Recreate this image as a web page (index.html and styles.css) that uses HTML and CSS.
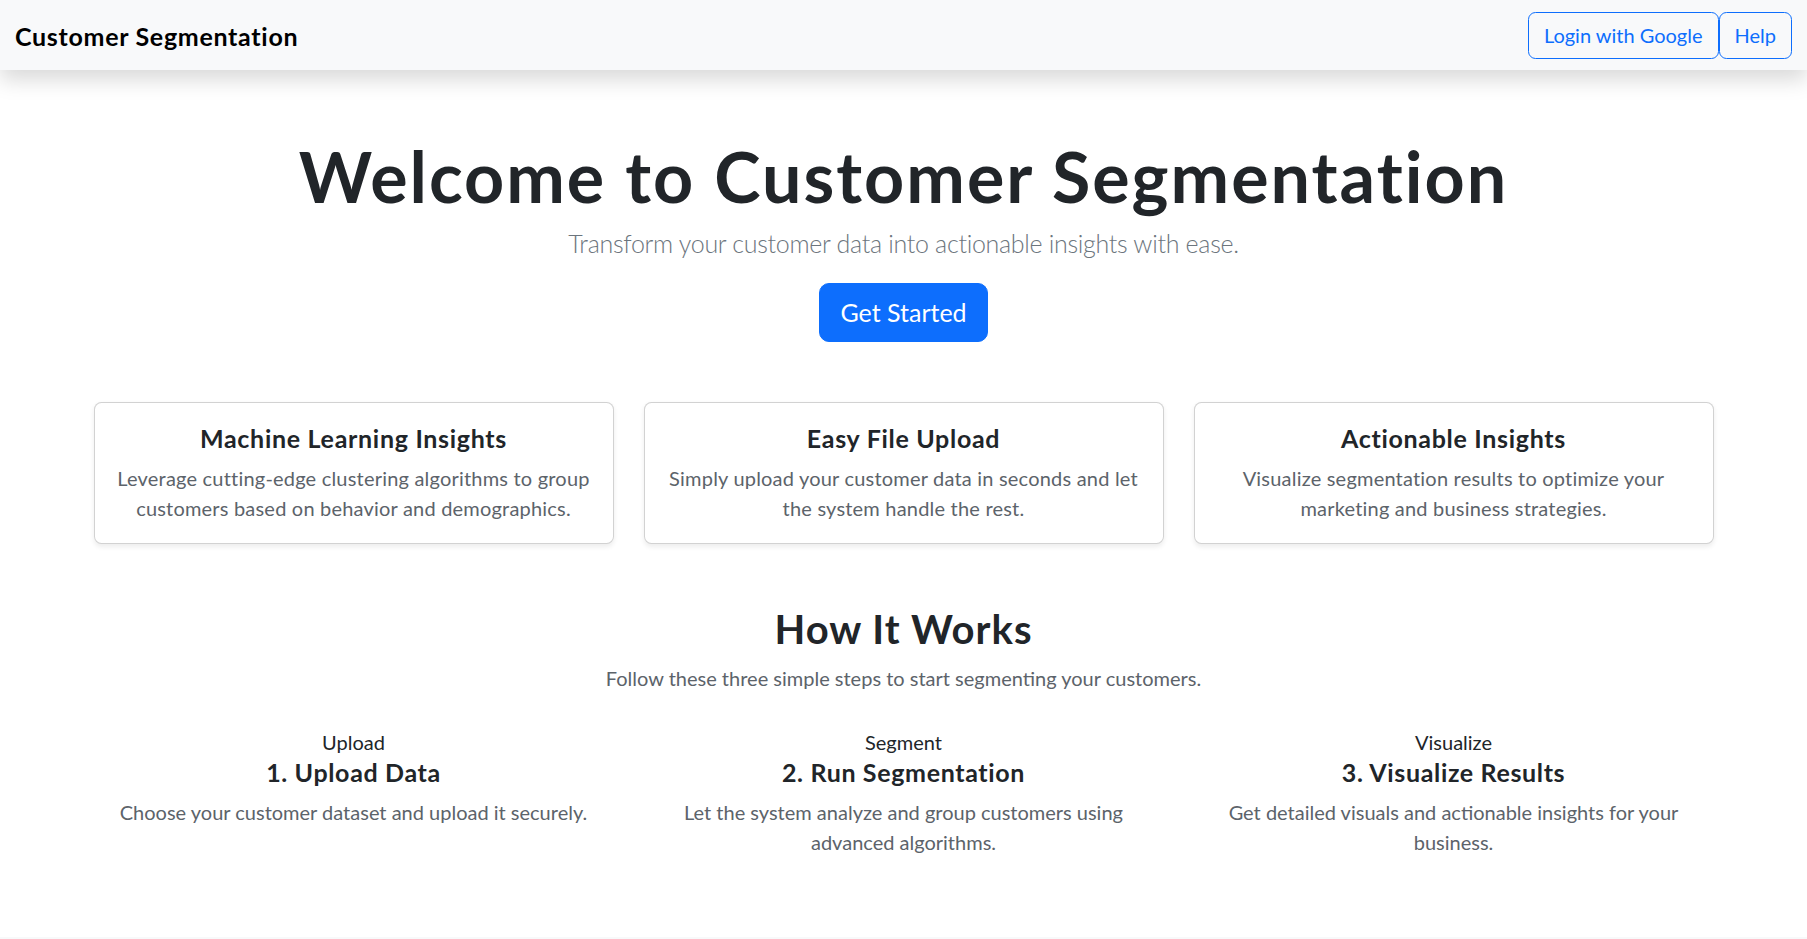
FILE: index.html
```html
<!DOCTYPE html>
<html lang="en">
<head>
<meta charset="utf-8">
<title>Customer Segmentation</title>
<link rel="stylesheet" href="styles.css">
</head>
<body>
<nav class="navbar">
  <a class="brand" href="#">Customer Segmentation</a>
  <div class="nav-actions">
    <a class="btn-outline" href="#">Login with Google</a>
    <a class="btn-outline" href="#">Help</a>
  </div>
</nav>

<main class="container">
  <section class="hero">
    <h1 class="hero-title">Welcome to Customer Segmentation</h1>
    <p class="lead">Transform your customer data into actionable insights with ease.</p>
    <a class="btn-primary" href="#">Get Started</a>
  </section>

  <section class="features">
    <div class="card">
      <h5 class="card-title">Machine Learning Insights</h5>
      <p class="card-text">Leverage cutting-edge clustering algorithms to group customers based on behavior and demographics.</p>
    </div>
    <div class="card">
      <h5 class="card-title">Easy File Upload</h5>
      <p class="card-text">Simply upload your customer data in seconds and let the system handle the rest.</p>
    </div>
    <div class="card">
      <h5 class="card-title">Actionable Insights</h5>
      <p class="card-text">Visualize segmentation results to optimize your marketing and business strategies.</p>
    </div>
  </section>

  <section class="how">
    <h2 class="how-title">How It Works</h2>
    <p class="how-sub">Follow these three simple steps to start segmenting your customers.</p>
    <div class="steps">
      <div class="step">
        <span class="step-img">Upload</span>
        <h5 class="step-title">1. Upload Data</h5>
        <p class="step-text">Choose your customer dataset and upload it securely.</p>
      </div>
      <div class="step">
        <span class="step-img">Segment</span>
        <h5 class="step-title">2. Run Segmentation</h5>
        <p class="step-text">Let the system analyze and group customers using advanced algorithms.</p>
      </div>
      <div class="step">
        <span class="step-img">Visualize</span>
        <h5 class="step-title">3. Visualize Results</h5>
        <p class="step-text">Get detailed visuals and actionable insights for your business.</p>
      </div>
    </div>
  </section>
</main>

<footer class="footer"></footer>
</body>
</html>
```

FILE: styles.css
```css
* { box-sizing: border-box; }

html, body {
  margin: 0;
  padding: 0;
}

body {
  font-family: "Lato", "Noto Sans", sans-serif;
  font-size: 20px;
  line-height: 1.5;
  color: #212529;
  background: #ffffff;
}

a { text-decoration: none; }

.navbar {
  height: 70px;
  padding: 0 15px;
  background: #f8f9fa;
  box-shadow: 0 10px 20px rgba(0, 0, 0, 0.15);
  display: flex;
  align-items: center;
  justify-content: space-between;
  position: relative;
  z-index: 2;
}

.brand {
  font-size: 25px;
  font-weight: 700;
  color: #000;
  line-height: 37.5px;
  padding-top: 4px;
  letter-spacing: 0.7px;
}

.nav-actions {
  display: flex;
}

.btn-outline {
  display: inline-block;
  font-size: 20px;
  line-height: 30px;
  padding: 7.5px 15px;
  color: #0d6efd;
  border: 1px solid #0d6efd;
  border-radius: 7.5px;
}

.container {
  max-width: 1650px;
  margin: 0 auto;
  padding: 0 15px;
}

.hero {
  text-align: center;
  padding-top: 61px;
}

.hero-title {
  font-size: 70px;
  font-weight: 700;
  line-height: 84px;
  letter-spacing: 2px;
  padding-top: 3px;
  margin: 0 0 7px;
}

.lead {
  font-size: 25px;
  font-weight: 300;
  line-height: 37.5px;
  letter-spacing: -0.3px;
  color: #6c757d;
  margin: 0 0 20px;
}

.btn-primary {
  display: inline-block;
  font-size: 25px;
  line-height: 37.5px;
  padding: 10px 20px;
  color: #fff;
  background: #0d6efd;
  border: 1px solid #0d6efd;
  border-radius: 10px;
}

.features {
  margin-top: 60px;
  display: grid;
  grid-template-columns: repeat(3, 1fr);
  gap: 30px;
}

.card {
  border: 1px solid rgba(0, 0, 0, 0.175);
  border-radius: 7.5px;
  box-shadow: 0 2.5px 5px rgba(0, 0, 0, 0.075);
  padding: 20px;
  text-align: center;
  background: #fff;
}

.card-title {
  font-size: 25px;
  font-weight: 700;
  line-height: 30px;
  letter-spacing: 0.7px;
  margin: 0 0 10px;
}

.card-text {
  margin: 0;
  color: #5c636a;
  letter-spacing: 0.2px;
}

.how {
  text-align: center;
  margin-top: 61px;
}

.how-title {
  font-size: 40px;
  font-weight: 700;
  line-height: 48px;
  letter-spacing: 1px;
  margin: 0 0 10px;
}

.how-sub {
  margin: 0 0 34px;
  color: #5c636a;
}

.steps {
  display: grid;
  grid-template-columns: repeat(3, 1fr);
  gap: 30px;
}

.step-img {
  display: block;
  line-height: 30px;
  color: #212529;
}

.step-title {
  font-size: 25px;
  font-weight: 700;
  line-height: 30px;
  letter-spacing: 0.65px;
  margin: 0 0 10px;
}

.step-text {
  margin: 0;
  color: #5c636a;
}

.footer {
  margin-top: 80px;
  height: 60px;
  background: #f8f9fa;
}
```
